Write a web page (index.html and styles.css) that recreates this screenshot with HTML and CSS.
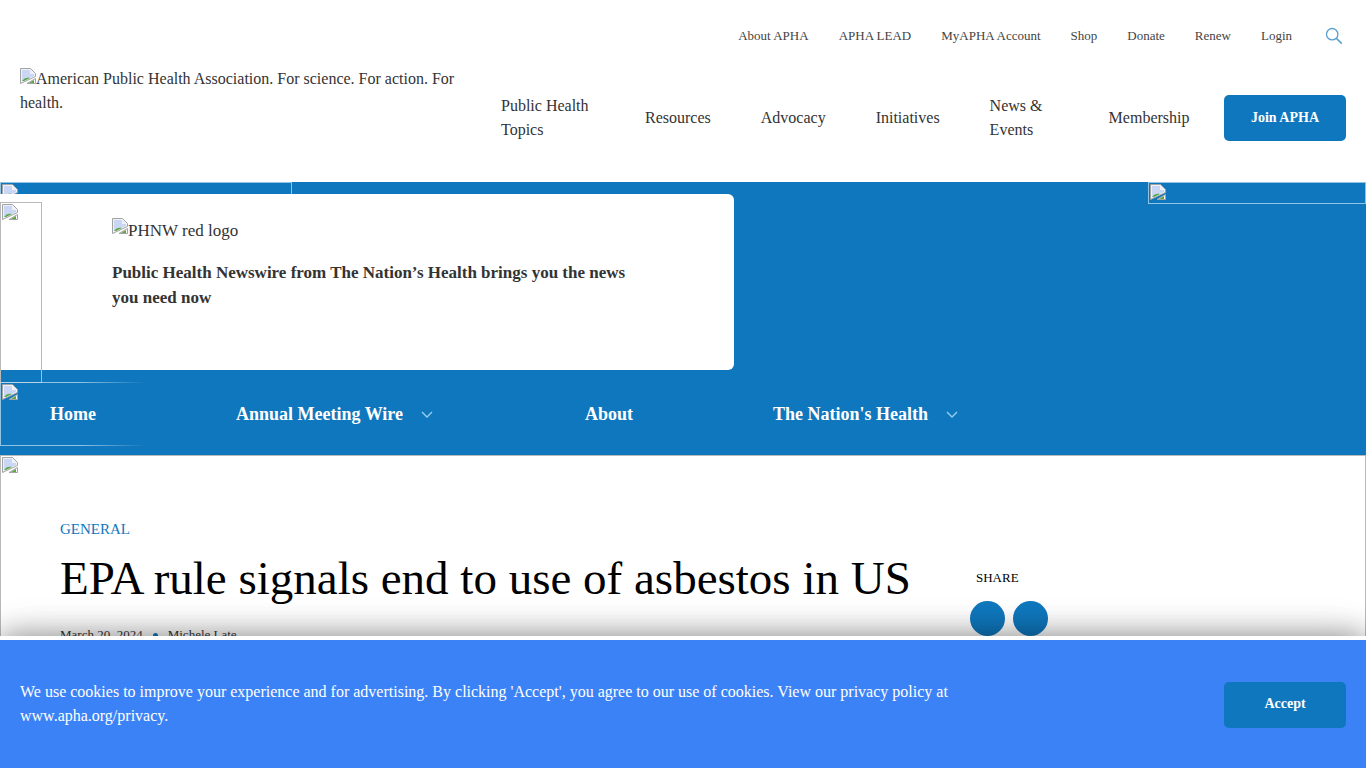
FILE: index.html
```html
<!DOCTYPE html>
<html lang="en">
<head>
    <meta charset="UTF-8">
    <meta name="viewport" content="width=device-width, initial-scale=1.0">
    <title>EPA rule signals end to use of asbestos in US</title>
    <link rel="stylesheet" href="styles.css">
</head>
<body>

    <svg class="sprite" width="0" height="0">
        <symbol id="broken" viewBox="0 0 16 16">
            <path d="M.5.5h10l5 5v3l-15 7z" fill="#eef1fa" stroke="#a3a3a3"/>
            <path d="M2 2h8v4h4v2L2 13z" fill="#c9d7f5"/>
            <path d="M2 13c2-3 5-4 8-3l-6 3z" fill="#5aa843"/>
            <path d="M7 15.5l8.5-5v5z" fill="#fff" stroke="#a3a3a3"/>
            <path d="M9 15l5-3v3z" fill="#5aa843"/>
        </symbol>
    </svg>

    <header class="site-header">
        <nav class="top-links">
            <a>About APHA</a>
            <a>APHA LEAD</a>
            <a>MyAPHA Account</a>
            <a>Shop</a>
            <a>Donate</a>
            <a>Renew</a>
            <a>Login</a>
            <svg class="search-icon" width="18" height="18" viewBox="0 0 18 18">
                <circle cx="7.2" cy="7.2" r="5.7" fill="none" stroke="#5b9fd0" stroke-width="1.3"/>
                <path d="M11.4 11.4l5.4 5.2" fill="none" stroke="#5b9fd0" stroke-width="1.5"/>
            </svg>
        </nav>
        <div class="main-row">
            <div class="logo"><svg class="broken"><use href="#broken"/></svg>American Public Health Association. For science. For action. For health.</div>
            <nav class="main-nav">
                <a class="wide">Public Health Topics</a>
                <a>Resources</a>
                <a>Advocacy</a>
                <a>Initiatives</a>
                <a class="narrow">News &amp; Events</a>
                <a>Membership</a>
            </nav>
            <a class="btn join-btn">Join APHA</a>
        </div>
    </header>

    <section class="hero">
        <span class="frame frame-top"><svg class="broken"><use href="#broken"/></svg></span>
        <span class="frame frame-right"><svg class="broken"><use href="#broken"/></svg></span>
        <div class="card">
            <div class="card-logo"><svg class="broken"><use href="#broken"/></svg>PHNW red logo</div>
            <p class="card-text">Public Health Newswire from The Nation’s Health brings you the news you need now</p>
        </div>
        <span class="frame frame-left"><svg class="broken"><use href="#broken"/></svg></span>
        <nav class="hero-nav">
            <span class="frame frame-nav"><svg class="broken"><use href="#broken"/></svg></span>
            <a class="nav-home">Home</a>
            <a class="nav-wire">Annual Meeting Wire
                <svg class="chevron" width="12" height="8" viewBox="0 0 12 8"><path d="M1 1l5 5 5-5" fill="none" stroke="#9fd0f2" stroke-width="1.3"/></svg>
            </a>
            <a class="nav-about">About</a>
            <a>The Nation's Health
                <svg class="chevron" width="12" height="8" viewBox="0 0 12 8"><path d="M1 1l5 5 5-5" fill="none" stroke="#9fd0f2" stroke-width="1.3"/></svg>
            </a>
        </nav>
    </section>

    <main class="article">
        <svg class="broken article-img"><use href="#broken"/></svg>
        <div class="article-head">
            <div class="article-title">
                <a class="category">GENERAL</a>
                <h1>EPA rule signals end to use of asbestos in US</h1>
                <div class="meta">
                    <span>March 20, 2024</span>
                    <i class="dot"></i>
                    <span>Michele Late</span>
                </div>
            </div>
            <div class="share">
                <div class="share-label">SHARE</div>
                <div class="share-buttons">
                    <a class="circle"></a>
                    <a class="circle"></a>
                </div>
            </div>
        </div>
    </main>

    <div class="cookie-wrap">
        <div class="cookie-bar">
            <p>We use cookies to improve your experience and for advertising. By clicking 'Accept', you agree to our use of cookies. View our privacy policy at www.apha.org/privacy.</p>
            <a class="btn accept-btn">Accept</a>
        </div>
    </div>

</body>
</html>
```

FILE: styles.css
```css
html, body {
    height: 768px;
    overflow: hidden;
}
body {
    margin: 0;
    font-family: "Liberation Serif", "Times New Roman", serif;
    font-size: 16px;
    color: #333;
    background: white;
}
.sprite {
    position: absolute;
}
.broken {
    width: 16px;
    height: 16px;
    display: inline-block;
    vertical-align: baseline;
}

/* header */
.site-header {
    height: 182px;
    box-sizing: border-box;
    padding: 27px 20px 0;
}
.top-links {
    display: flex;
    justify-content: flex-end;
    align-items: center;
    gap: 30px;
    height: 18px;
    padding-right: 3px;
    font-size: 13px;
    color: #444;
}
.search-icon {
    margin-left: 3px;
}
.main-row {
    display: flex;
    margin-top: 22px;
}
.logo {
    width: 441px;
    line-height: 24px;
    flex-shrink: 0;
}
.main-nav {
    display: flex;
    align-items: center;
    gap: 50px;
    margin-left: 40px;
    margin-top: 3px;
    height: 96px;
    line-height: 24px;
}
.main-nav .wide {
    width: 94px;
}
.main-nav .narrow {
    width: 69px;
}
.btn {
    display: flex;
    align-items: center;
    justify-content: center;
    box-sizing: border-box;
    width: 122px;
    height: 46px;
    border-radius: 5px;
    background-color: #0f77bd;
    color: white;
    font-weight: bold;
    font-size: 14px;
}
.join-btn {
    margin: 28px 0 0 auto;
}

/* hero */
.hero {
    position: relative;
    height: 273px;
    box-sizing: border-box;
    padding-top: 12px;
    background-color: #0f77bd;
}
.frame {
    position: absolute;
    box-sizing: border-box;
    padding: 1px;
    border: 1px solid rgba(190, 220, 240, .75);
    line-height: 0;
}
.frame-top {
    left: 0;
    top: 0;
    width: 292px;
    height: 12px;
    overflow: hidden;
    border-bottom: none;
}
.frame-right {
    right: 0;
    top: 0;
    width: 218px;
    height: 22px;
}
.frame-left {
    left: 0;
    top: 20px;
    width: 42px;
    height: 181px;
    border-color: #b9b9b9;
}
.frame-nav {
    left: 0;
    top: 0;
    width: 146px;
    height: 64px;
    border-right: none;
    -webkit-mask-image: linear-gradient(to right, black 55%, transparent);
}
.card {
    box-sizing: border-box;
    width: 734px;
    height: 176px;
    padding: 24px 100px 0 112px;
    border-radius: 0 6px 6px 0;
    background: white;
}
.card-logo {
    height: 24px;
    font-size: 17px;
    line-height: 24px;
}
.card-logo .broken {
    vertical-align: 2px;
}
.card-text {
    margin: 18px 0 0;
    font-size: 17px;
    font-weight: bold;
    line-height: 25px;
}
.hero-nav {
    position: relative;
    display: flex;
    align-items: center;
    height: 64px;
    margin-top: 12px;
    padding: 1px 0 0 50px;
    box-sizing: border-box;
    font-size: 18px;
    font-weight: bold;
    color: white;
}
.hero-nav a {
    flex-shrink: 0;
}
.nav-home {
    width: 186px;
}
.nav-wire {
    width: 349px;
}
.nav-about {
    width: 188px;
}
.chevron {
    margin-left: 13px;
    vertical-align: 1px;
}

/* article */
.article {
    position: relative;
    height: 313px;
    box-sizing: border-box;
    border: 1px solid #b9b9b9;
    border-bottom: none;
    padding: 0 59px;
    color: black;
}
.article-img {
    position: absolute;
    left: 1px;
    top: 1px;
}
.article-head {
    display: flex;
    padding-top: 64px;
}
.article-title {
    width: 916px;
    flex-shrink: 0;
}
.category {
    display: block;
    font-size: 15px;
    line-height: 18px;
    color: #0f77bd;
}
h1 {
    margin: 10px 0 0;
    font-size: 47px;
    font-weight: normal;
    line-height: 60px;
}
.meta {
    display: flex;
    align-items: center;
    gap: 10px;
    margin-top: 19px;
    font-size: 13px;
    color: #333;
}
.dot {
    width: 5px;
    height: 5px;
    border-radius: 50%;
    background-color: #0f77bd;
}
.share {
    margin-left: -6px;
    padding-top: 49px;
}
.share-label {
    margin-left: 6px;
    font-size: 13px;
    line-height: 18px;
}
.share-buttons {
    display: flex;
    gap: 8px;
    margin-top: 14px;
}
.circle {
    width: 35px;
    height: 35px;
    border-radius: 50%;
    background-color: #0f77bd;
}

/* cookie banner */
.cookie-wrap {
    position: fixed;
    left: 0;
    right: 0;
    bottom: 0;
    padding-top: 4px;
    background: white;
    box-shadow: 0 0 30px rgba(0, 0, 0, .45), 0 0 50px rgba(0, 0, 0, .08);
}
.cookie-bar {
    display: flex;
    align-items: center;
    justify-content: space-between;
    height: 128px;
    box-sizing: border-box;
    padding: 0 20px;
    background-color: #3b82f6;
    color: white;
}
.cookie-bar p {
    width: 960px;
    margin: 0;
    line-height: 24px;
}
.accept-btn {
    margin-top: 2px;
    padding-bottom: 2px;
}
```
